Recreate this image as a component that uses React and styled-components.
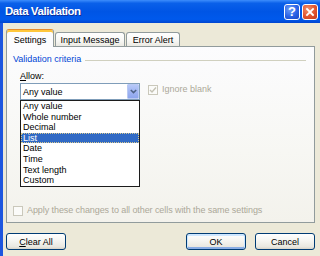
import React from "react";
import styled, { createGlobalStyle, css } from "styled-components";

const GlobalStyle = createGlobalStyle`
  html, body { margin: 0; padding: 0; width: 320px; height: 256px; overflow: hidden; background: #ECE9D8; }
  #root { width: 320px; height: 256px; }
`;

const Window = styled.div`
  width: 320px;
  height: 256px;
  display: flex;
  flex-direction: column;
  background: #ece9d8;
  font-family: "Liberation Sans", Arial, sans-serif;
  font-size: 9px;
  color: #000;
`;

const TitleBar = styled.div`
  flex: none;
  height: 23px;
  display: flex;
  align-items: center;
  padding: 0 2px 0 5px;
  background: linear-gradient(180deg, #3d8dfc 0%, #0a60e9 14%, #0055e5 50%, #0059ec 84%, #0045cf 100%);
`;

const Title = styled.span`
  flex: 1;
  color: #fff;
  font-weight: bold;
  font-size: 11.5px;
  letter-spacing: -0.45px;
  text-shadow: 1px 1px 0 #0b2f9c;
  padding-bottom: 1px;
`;

const CaptionButton = styled.div`
  width: 16px;
  height: 16px;
  box-sizing: border-box;
  margin-left: 2px;
  border: 1px solid #fff;
  border-radius: 3px;
  display: flex;
  align-items: center;
  justify-content: center;
  color: #fff;
  font-weight: bold;
  font-size: 13px;
  ${(p) =>
    p.$variant === "close"
      ? css`background: radial-gradient(circle at 35% 30%, #f1906c 0%, #e0542f 55%, #c2391b 100%);`
      : css`background: radial-gradient(circle at 35% 30%, #6f9ef7 0%, #2a63e6 55%, #1844c4 100%);`}
`;

const Body = styled.div`
  flex: 1;
  display: flex;
  flex-direction: column;
  border-left: 3px solid #1d56df;
  padding: 6px 5px 6px 3px;
  min-height: 0;
`;

const TabRow = styled.div`
  flex: none;
  height: 17px;
  display: flex;
  align-items: flex-end;
  position: relative;
  z-index: 1;
`;

const Tab = styled.div`
  box-sizing: border-box;
  width: ${(p) => p.$w}px;
  border: 1px solid #919b9c;
  border-bottom: none;
  border-radius: 3px 3px 0 0;
  display: flex;
  align-items: center;
  justify-content: center;
  ${(p) =>
    p.$active
      ? css`
          height: 18px;
          margin-bottom: -1px;
          margin-right: 1px;
          background: #fcfcfe;
          border-top: 1px solid #e68b2c;
          box-shadow: inset 0 2px 0 #ffc73c;
          padding-top: 2px;
        `
      : css`
          height: 14px;
          margin-right: 1px;
          background: linear-gradient(180deg, #ffffff 0%, #f7f7f4 60%, #ebeae3 100%);
        `}
`;

const Panel = styled.div`
  flex: 1;
  min-height: 0;
  display: flex;
  flex-direction: column;
  border: 1px solid #919b9c;
  background: linear-gradient(180deg, #fcfcfe 0%, #f7f7f3 60%, #f3f2ec 100%);
  padding: 7px 8px 0 6px;
`;

const GroupHeader = styled.div`
  display: flex;
  align-items: center;
  gap: 4px;
  line-height: 11px;
  color: #0046d5;
  &::after {
    content: "";
    flex: 1;
    height: 1px;
    background: #d0d0bf;
    margin-top: 1px;
  }
`;

const Label = styled.div`
  line-height: 11px;
  margin: 6px 0 0 7px;
`;

const Key = styled.span`
  text-decoration: underline;
  text-underline-offset: 1px;
`;

const ControlRow = styled.div`
  display: flex;
  align-items: flex-start;
  gap: 8px;
  margin: 1px 0 0 7px;
`;

const ComboWrap = styled.div`
  position: relative;
  width: 120px;
  flex: none;
`;

const Combo = styled.div`
  box-sizing: border-box;
  height: 17px;
  border: 1px solid #7f9db9;
  background: #fff;
  display: flex;
  align-items: stretch;
`;

const ComboText = styled.div`
  flex: 1;
  padding: 1px 0 0 2px;
  display: flex;
  align-items: center;
`;

const ComboButton = styled.div`
  width: 12px;
  box-sizing: border-box;
  border: 1px solid #b9c9f3;
  border-radius: 1px;
  background: linear-gradient(180deg, #b7c8f8 0%, #a0b5f2 50%, #8ea6ee 100%);
  display: flex;
  align-items: center;
  justify-content: center;
`;

const DropList = styled.div`
  position: absolute;
  top: 100%;
  left: 0;
  width: 100%;
  box-sizing: border-box;
  border: 1px solid #1c1c1c;
  background: #fff;
  z-index: 2;
`;

const Item = styled.div`
  height: 10.6px;
  line-height: 10.6px;
  padding-left: 2px;
  white-space: nowrap;
  ${(p) =>
    p.$selected &&
    css`
      background: #316ac5;
      color: #fff;
      outline: 1px dotted #d9c98f;
      outline-offset: -1px;
    `}
`;

const CheckRow = styled.label`
  display: flex;
  align-items: center;
  gap: 4px;
  color: #aca899;
  line-height: 11px;
  ${(p) =>
    p.$bottom &&
    css`
      margin-top: auto;
      margin-bottom: 6px;
      letter-spacing: -0.08px;
    `}
  ${(p) =>
    p.$side &&
    css`
      margin-top: 1px;
    `}
`;

const Box = styled.span`
  width: 10px;
  height: 10px;
  box-sizing: border-box;
  border: 1px solid #cac8bb;
  background: #fbfbf9;
  display: flex;
  align-items: center;
  justify-content: center;
  flex: none;
`;

const Footer = styled.div`
  flex: none;
  display: flex;
  align-items: center;
  margin-top: 10px;
  gap: 9px;
`;

const Spacer = styled.div`
  flex: 1;
`;

const Button = styled.div`
  box-sizing: border-box;
  width: 60px;
  height: 17px;
  border: 1px solid #003c74;
  border-radius: 3px;
  background: linear-gradient(180deg, #ffffff 0%, #f5f5f1 45%, #e9e8e0 85%, #d8d3c8 100%);
  display: flex;
  align-items: center;
  justify-content: center;
  ${(p) =>
    p.$default &&
    css`
      box-shadow: inset 0 1px 0 1px #cee7ff, inset 0 -1px 0 1px #89ade4;
    `}
`;

const items = ["Any value", "Whole number", "Decimal", "List", "Date", "Time", "Text length", "Custom"];

const Check = () => (
  <svg width="8" height="8" viewBox="0 0 8 8">
    <path d="M1 4 L3 6 L7 1.5" fill="none" stroke="#c4c2b4" strokeWidth="1.4" />
  </svg>
);

export default function App() {
  return (
    <>
      <GlobalStyle />
      <Window>
        <TitleBar>
          <Title>Data Validation</Title>
          <CaptionButton $variant="help">?</CaptionButton>
          <CaptionButton $variant="close">
            <svg width="10" height="10" viewBox="0 0 10 10">
              <path d="M2 2 L8 8 M8 2 L2 8" stroke="#fff" strokeWidth="1.8" strokeLinecap="square" />
            </svg>
          </CaptionButton>
        </TitleBar>
        <Body>
          <TabRow>
            <Tab $active $w={48}>Settings</Tab>
            <Tab $w={70}>Input Message</Tab>
            <Tab $w={54}>Error Alert</Tab>
          </TabRow>
          <Panel>
            <GroupHeader>Validation criteria</GroupHeader>
            <Label>
              <Key>A</Key>llow:
            </Label>
            <ControlRow>
              <ComboWrap>
                <Combo>
                  <ComboText>Any value</ComboText>
                  <ComboButton>
                    <svg width="7" height="5" viewBox="0 0 7 5">
                      <path d="M0.8 1 L3.5 3.6 L6.2 1" fill="none" stroke="#4d6185" strokeWidth="1.5" />
                    </svg>
                  </ComboButton>
                </Combo>
                <DropList>
                  {items.map((it) => (
                    <Item key={it} $selected={it === "List"}>
                      {it}
                    </Item>
                  ))}
                </DropList>
              </ComboWrap>
              <CheckRow $side>
                <Box>
                  <Check />
                </Box>
                Ignore blank
              </CheckRow>
            </ControlRow>
            <CheckRow $bottom>
              <Box />
              Apply these changes to all other cells with the same settings
            </CheckRow>
          </Panel>
          <Footer>
            <Button>
              <span>
                <Key>C</Key>lear All
              </span>
            </Button>
            <Spacer />
            <Button $default>OK</Button>
            <Button>Cancel</Button>
          </Footer>
        </Body>
      </Window>
    </>
  );
}
